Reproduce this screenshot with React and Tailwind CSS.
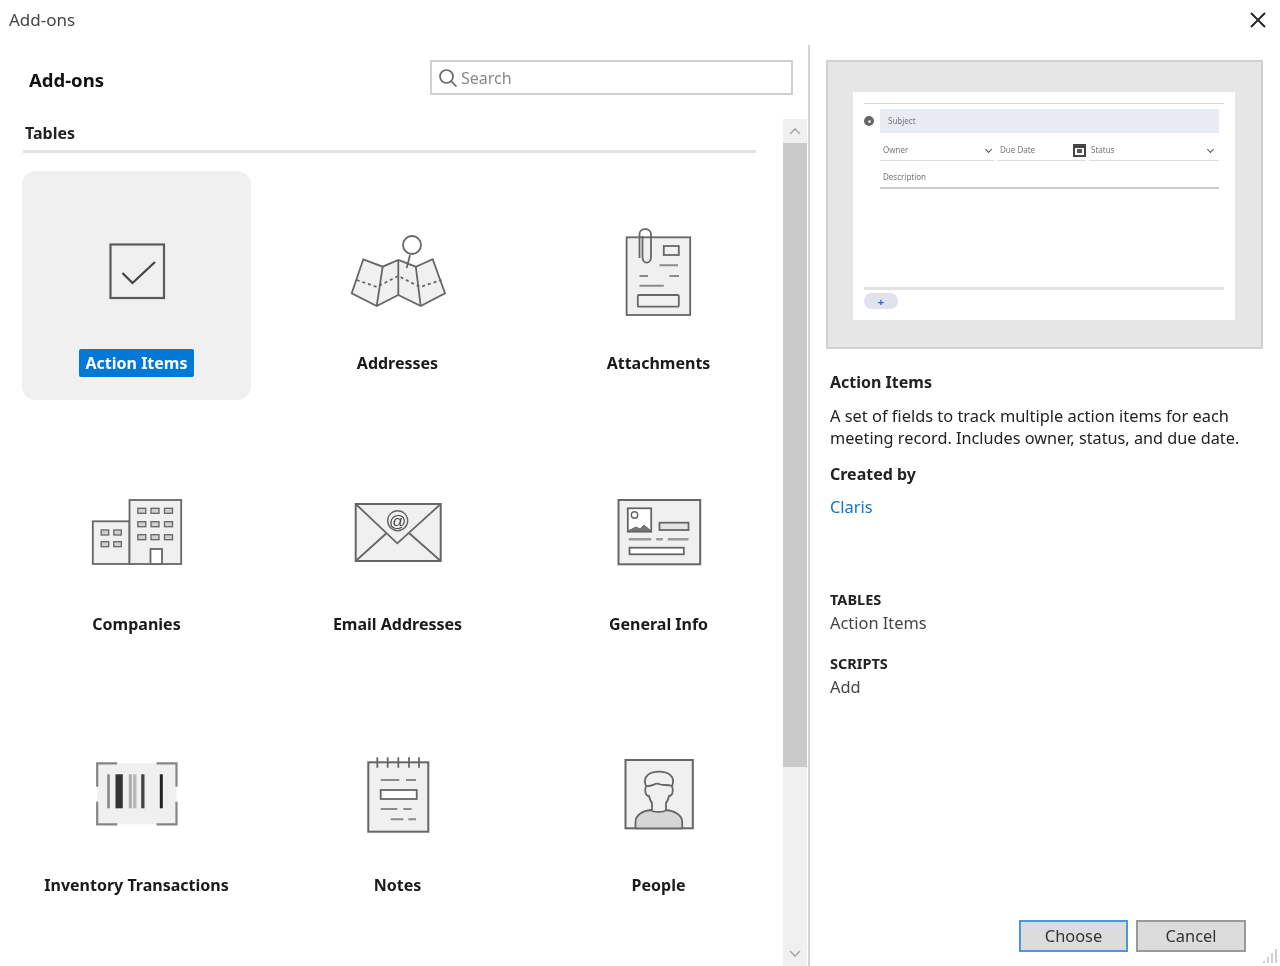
import React from "react";

const S = "#666666";
const F = "#f0f0f0";

function Icon({ children }) {
  return (
    <svg width="100" height="90" viewBox="0 0 100 90" fill="none" stroke={S} strokeWidth="1.8">
      {children}
    </svg>
  );
}

const icons = {
  action: (
    <Icon>
      <rect x="23.5" y="18.5" width="53.5" height="53.5" fill={F} stroke="#5a5a5a" strokeWidth="2.2" />
      <path d="M35.5 47L45.5 57L68 36" strokeWidth="2.2" stroke="#444" />
    </Icon>
  ),
  map: (
    <Icon>
      <path d="M15.3 33.3L34.7 40.7L50.3 34L67.8 40.7L84.7 33.3L97 67.3L72.7 80L50.3 69L28.7 80L3.7 67.3Z" fill={F} />
      <path d="M34.7 40.7L28.7 80M50.3 34V69M67.8 40.7L72.7 80" />
      <path d="M8.7 54L28.7 61L50.3 50L72 61L93.7 54" strokeDasharray="3 3" />
      <path d="M62 29L58.7 42" />
      <circle cx="64" cy="19" r="9" fill="#fff" />
    </Icon>
  ),
  attach: (
    <Icon>
      <rect x="17.6" y="11.3" width="63.6" height="77.7" fill={F} />
      <path d="M33.5 10V31C33.5 38.5 42 38.5 42 31V8C42 1.5 30.5 1.5 30.5 8V32" />
      <rect x="54.8" y="20" width="15" height="9" />
      <path d="M50.5 39.3H69M30.5 50H39M60.5 50H70M30.5 59.7H54.8" strokeWidth="2" stroke="#8a8a8a" />
      <rect x="28.8" y="69" width="41" height="11.7" rx="1" />
    </Icon>
  ),
  company: (
    <Icon>
      <rect x="5.8" y="34.3" width="36.7" height="42.7" fill={F} />
      <rect x="42.5" y="13" width="51.7" height="64" fill={F} />
      <g fill="#d0d0d0" strokeWidth="1.3">
        <rect x="50.8" y="21.3" width="8" height="5" />
        <rect x="64" y="21.3" width="8" height="5" />
        <rect x="77.5" y="21.3" width="8" height="5" />
        <rect x="50.8" y="34.7" width="8" height="5" />
        <rect x="64" y="34.7" width="8" height="5" />
        <rect x="77.5" y="34.7" width="8" height="5" />
        <rect x="50.8" y="47.7" width="8" height="5" />
        <rect x="64" y="47.7" width="8" height="5" />
        <rect x="77.5" y="47.7" width="8" height="5" />
        <rect x="14.2" y="43" width="7.5" height="5" />
        <rect x="26.8" y="43" width="7.5" height="5" />
        <rect x="14.2" y="54.7" width="7.5" height="5" />
        <rect x="26.8" y="54.7" width="7.5" height="5" />
      </g>
      <rect x="63.5" y="62" width="11.5" height="15" fill="#fff" />
    </Icon>
  ),
  email: (
    <Icon>
      <rect x="7.7" y="17" width="85" height="57" fill={F} strokeWidth="2" />
      <path d="M7.7 17L49.3 56.3L92.7 17M7.7 74L38.7 46M92.7 74L61 46" />
      <circle cx="49.7" cy="33.7" r="10" fill={F} strokeWidth="1.4" />
      <text x="49.7" y="39.5" textAnchor="middle" fontSize="17" fontFamily="Liberation Sans, sans-serif" fill="#444" stroke="none">@</text>
    </Icon>
  ),
  info: (
    <Icon>
      <rect x="9.5" y="13" width="81.7" height="64.3" fill={F} strokeWidth="2" />
      <rect x="18.8" y="21.3" width="23.4" height="23.4" fill="#fff" />
      <circle cx="25.5" cy="28" r="3.2" strokeWidth="1.4" />
      <path d="M19 44L27 40L31 42L35 38L42 44Z" fill="#777" strokeWidth="1" />
      <rect x="50.5" y="35.7" width="29" height="7.3" fill="#e4e4e4" />
      <path d="M19.8 52.3H42.2M47.2 52.3H53.8M58.8 52.3H79.5" strokeWidth="2.4" stroke="#9a9a9a" />
      <rect x="20.5" y="60.7" width="54.3" height="6.6" fill="#fff" />
    </Icon>
  ),
  barcode: (
    <Icon>
      <rect x="10.2" y="15.3" width="79.3" height="61" fill={F} stroke="none" />
      <path d="M10.2 38.7V15.3H30.2M69.5 15.3H89.5V38.7M89.5 53.7V76.3H69.5M30.2 76.3H10.2V53.7" stroke="#858585" strokeWidth="2.2" />
      <g stroke="none">
        <rect x="20.2" y="26.3" width="2.6" height="34" fill="#888" />
        <rect x="28.5" y="26.3" width="7.3" height="34" fill="#333" />
        <rect x="41.8" y="26.3" width="3" height="34" fill="#aaa" />
        <rect x="46" y="26.3" width="3.5" height="34" fill="#b8b8b8" />
        <rect x="54.2" y="26.3" width="3.3" height="34" fill="#444" />
        <rect x="72.8" y="26.3" width="3" height="34" fill="#222" />
      </g>
    </Icon>
  ),
  notes: (
    <Icon>
      <rect x="20.3" y="14.3" width="60" height="69.4" fill={F} strokeWidth="2" />
      <path d="M29.3 9.3V19.7M39.7 9.3V19.7M50.3 9.3V19.7M61 9.3V19.7M71 9.3V19.7" />
      <path d="M32.7 32H51.3M58 32H68M32.7 61H49.3M55.3 61H63.7M42.7 71.3H55.3M60.3 71.3H68" stroke="#8a8a8a" strokeWidth="2" />
      <rect x="32.7" y="42" width="36" height="9" fill="#fff" strokeWidth="1.8" />
    </Icon>
  ),
  people: (
    <Icon>
      <rect x="16.5" y="12" width="67.3" height="68.3" fill={F} strokeWidth="2" />
      <path d="M26.5 80.3V74C26.5 67 34 62.5 42 62C44 64.5 55 64.5 57 62C65 62.5 73.2 67 73.2 74V80.3Z" fill="#d6d6d6" />
      <path d="M37 38C33 28 41 23.7 50 23.7C59 23.7 67 28 63 38C65 44 63 48 60 48C59 52 58 54 57 55V62M37 38C35 44 37 48 40 48C41 52 42 54 43 55V62" />
      <path d="M37 38C44 39 46 34 50 36C54 38 58 36 63 38" />
    </Icon>
  ),
};

const items = [
  ["action", "Action Items"],
  ["map", "Addresses"],
  ["attach", "Attachments"],
  ["company", "Companies"],
  ["email", "Email Addresses"],
  ["info", "General Info"],
  ["barcode", "Inventory Transactions"],
  ["notes", "Notes"],
  ["people", "People"],
];

function Tile({ icon, label, selected }) {
  return (
    <div className={`flex h-[229px] flex-col items-center pt-[55px] rounded-[14px] ${selected ? "bg-[#f0f0f0]" : ""}`}>
      {icons[icon]}
      <div className={`mt-[33px] flex h-[28px] items-center whitespace-nowrap rounded-[2px] px-[7px] text-[16px] font-bold ${selected ? "bg-[#0078d7] text-white" : "text-[#1a1a1a]"}`}>
        {label}
      </div>
    </div>
  );
}

function Preview() {
  return (
    <div className="h-[289px] w-[437px] border-2 border-[#d0d0d0] bg-[#e6e6e6] pl-[25px] pt-[30px]">
      <div className="flex h-[228px] w-[382px] flex-col bg-white px-[11px] pt-[11px] text-[8px] leading-none text-[#777]">
        <div className="h-[1px] bg-[#d8d8d8]" />
        <div className="mt-[5px] flex items-center">
          <div className="flex h-[10px] w-[10px] items-center justify-center rounded-full bg-[#666]">
            <div className="h-[3px] w-[3px] rounded-full bg-[#ddd]" />
          </div>
          <div className="ml-[6px] flex h-[24px] w-[339px] items-center bg-[#e8eaf4] pl-[8px]">Subject</div>
        </div>
        <div className="ml-[16px] mt-[7px] flex w-[339px] gap-[3px]">
          <div className="flex h-[21px] w-[114px] items-center justify-between border-b border-[#ddd] pl-[3px] pr-[3px]">
            <span>Owner</span>
            <span className="h-[5px] w-[5px] -translate-y-[1px] rotate-45 border-b border-r border-[#555]" />
          </div>
          <div className="flex h-[21px] w-[89px] items-center justify-between border-b border-[#ddd] pl-[3px]">
            <span>Due Date</span>
            <span className="flex h-[13px] w-[13px] items-center justify-center border-2 border-t-[4px] border-[#444]">
              <span className="h-[4px] w-[5px] bg-[#555]" />
            </span>
          </div>
          <div className="flex h-[21px] flex-1 items-center justify-between border-b border-[#ddd] pl-[2px] pr-[6px]">
            <span>Status</span>
            <span className="h-[5px] w-[5px] -translate-y-[1px] rotate-45 border-b border-r border-[#555]" />
          </div>
        </div>
        <div className="ml-[16px] flex h-[28px] w-[339px] items-center border-b-2 border-[#ccc] pl-[3px] pt-[5px]">Description</div>
        <div className="mt-[98px] h-[3px] bg-[#e2e2e2]" />
        <div className="mt-[3px] flex h-[16px] w-[34px] items-center justify-center rounded-full bg-[#e0e2ee] text-[11px] font-bold text-[#2563eb]">+</div>
      </div>
    </div>
  );
}

export default function App() {
  return (
    <div className="relative flex h-[966px] w-[1280px] flex-col overflow-hidden bg-white text-[16.4px] text-[#222] blur-[0.6px] [font-family:'Noto_Sans',sans-serif]">
      <div className="flex h-[40px] items-center justify-between pl-[9px] pr-[13px]">
        <span className="text-[17px] text-[#444]">Add-ons</span>
        <svg width="18" height="18" viewBox="0 0 18 18" stroke="#222" strokeWidth="1.8"><path d="M2 2L16 16M16 2L2 16" /></svg>
      </div>
      <div className="mt-[5px] flex flex-1 min-h-0">
        <div className="flex w-[810px] flex-col border-r-2 border-[#d4d4d4]">
          <div className="flex h-[74px] items-start justify-between pl-[29px] pr-[15px] pt-[15px]">
            <span className="flex h-[40px] items-center text-[18.5px] font-bold text-[#111]">Add-ons</span>
            <div className="flex h-[35px] w-[363px] items-center border-2 border-[#cfcfcf] pl-[6px]">
              <svg width="20" height="20" viewBox="0 0 20 20" fill="none" stroke="#666" strokeWidth="1.7"><circle cx="8.5" cy="8.5" r="6.5" /><path d="M13 13L18.5 18.5" /></svg>
              <span className="ml-[3px] text-[16px] text-[#888]">Search</span>
            </div>
          </div>
          <div className="flex min-h-0 flex-1">
            <div className="w-[783px] overflow-hidden">
              <div className="pl-[25px] pt-[3px] text-[16px] font-bold leading-[22px] text-[#222]">Tables</div>
              <div className="ml-[23px] mt-[6px] h-[3px] w-[733px] bg-[#e2e2e2]" />
              <div className="ml-[22px] mt-[18px] grid grid-cols-[229px_229px_229px] gap-[32px]">
                {items.map(([i, l], n) => (
                  <Tile key={l} icon={i} label={l} selected={n === 0} />
                ))}
              </div>
            </div>
            <div className="flex w-[24px] flex-col items-center bg-[#f0f0f0]">
              <div className="flex h-[24px] items-center justify-center">
                <svg width="12" height="8" viewBox="0 0 12 8" fill="none" stroke="#aaa" strokeWidth="1.6"><path d="M1 7L6 2L11 7" /></svg>
              </div>
              <div className="h-[624px] w-full bg-[#c9c9c9]" />
              <div className="mt-auto flex h-[24px] items-center justify-center">
                <svg width="12" height="8" viewBox="0 0 12 8" fill="none" stroke="#aaa" strokeWidth="1.6"><path d="M1 1L6 6L11 1" /></svg>
              </div>
            </div>
          </div>
        </div>
        <div className="flex flex-1 flex-col pl-[16px] pt-[15px]">
          <Preview />
          <div className="pl-[4px] leading-[22px]">
            <div className="mt-[22px] text-[16px] font-bold">Action Items</div>
            <div className="mt-[12px] whitespace-nowrap">A set of fields to track multiple action items for each</div>
            <div className="whitespace-nowrap text-[16.25px]">meeting record. Includes owner, status, and due date.</div>
            <div className="mt-[14px] text-[16px] font-bold">Created by</div>
            <div className="mt-[11px] text-[#1173c9]">Claris</div>
            <div className="mt-[70px] text-[14.5px] font-bold">TABLES</div>
            <div className="mt-[2px] text-[#444]">Action Items</div>
            <div className="mt-[18px] text-[14.5px] font-bold">SCRIPTS</div>
            <div className="mt-[2px] text-[#444]">Add</div>
          </div>
          <div className="mb-[14px] ml-[193px] mt-auto flex gap-[8px]">
            <div className="flex h-[32px] w-[109px] items-center justify-center border-2 border-[#4a97e4] bg-[#dcdcdc] text-[#333]">Choose</div>
            <div className="flex h-[32px] w-[110px] items-center justify-center border-2 border-[#9a9a9a] bg-[#dcdcdc] text-[#333]">Cancel</div>
          </div>
        </div>
      </div>
      <svg className="absolute bottom-[2px] right-[2px]" width="16" height="16" viewBox="0 0 16 16" fill="#d0d0d0">
        <rect x="13" y="1" width="2" height="14" />
        <rect x="9" y="5" width="2" height="10" />
        <rect x="5" y="9" width="2" height="6" />
        <rect x="1" y="13" width="2" height="2" />
      </svg>
    </div>
  );
}
